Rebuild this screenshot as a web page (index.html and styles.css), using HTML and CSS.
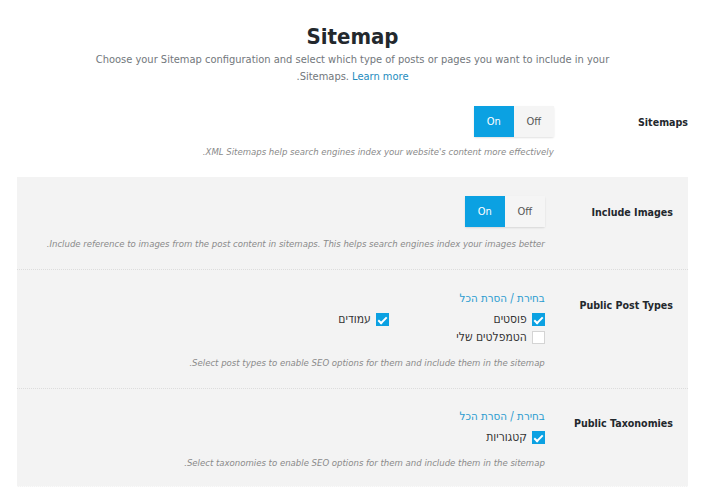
FILE: index.html
```html
<!DOCTYPE html>
<html lang="he" dir="rtl">
<head>
<meta charset="utf-8">
<link rel="stylesheet" href="styles.css">
</head>
<body>
<div class="page">
  <header class="intro">
    <h1>Sitemap</h1>
    <p>Choose your Sitemap configuration and select which type of posts or pages you want to include in your<br>Sitemaps. <a href="#">Learn more</a>.</p>
  </header>

  <div class="row top">
    <div class="label">Sitemaps</div>
    <div class="field">
      <div class="toggle"><span class="opt on">On</span><span class="opt">Off</span></div>
      <p class="desc">XML Sitemaps help search engines index your website's content more effectively.</p>
    </div>
  </div>

  <div class="panel">
    <div class="row images">
      <div class="label">Include Images</div>
      <div class="field">
        <div class="toggle"><span class="opt on">On</span><span class="opt">Off</span></div>
        <p class="desc">Include reference to images from the post content in sitemaps. This helps search engines index your images better.</p>
      </div>
    </div>

    <div class="row types">
      <div class="label">Public Post Types</div>
      <div class="field">
        <a class="select-all" href="#">בחירת / הסרת הכל</a>
        <div class="checks">
          <label class="check"><span class="box checked"></span>פוסטים</label>
          <label class="check"><span class="box checked"></span>עמודים</label>
          <label class="check"><span class="box"></span>הטמפלטים שלי</label>
        </div>
        <p class="desc">Select post types to enable SEO options for them and include them in the sitemap.</p>
      </div>
    </div>

    <div class="row last">
      <div class="label">Public Taxonomies</div>
      <div class="field">
        <a class="select-all" href="#">בחירת / הסרת הכל</a>
        <div class="checks">
          <label class="check"><span class="box checked"></span>קטגוריות</label>
        </div>
        <p class="desc">Select taxonomies to enable SEO options for them and include them in the sitemap.</p>
      </div>
    </div>
  </div>
</div>
</body>
</html>
```
FILE: styles.css
```css
html, body {
  margin: 0;
  background: #fff;
}
body {
  font-family: Tahoma, "DejaVu Sans Condensed", "DejaVu Sans", sans-serif;
  color: #23282d;
  font-size: 12px;
}
.page {
  padding: 0 17px;
}
.intro {
  text-align: center;
}
.intro h1 {
  margin: 23px 0 0;
  font-size: 22px;
  line-height: 28px;
  font-weight: bold;
  color: #23282d;
}
.intro p {
  width: 530px;
  margin: 0 auto;
  font-size: 11px;
  line-height: 17px;
  color: #72777c;
}
.intro a {
  color: #1e8cbe;
  text-decoration: none;
}
.row {
  display: grid;
  grid-template-columns: 20% 1fr;
}
.row.top {
  padding: 21px 0 17px;
}
.panel {
  background: #f3f3f3;
}
.panel .row {
  padding: 19px 15px 17px;
  border-bottom: 1px dotted #dcdcdc;
}
.panel .row.last {
  padding-top: 18px;
  padding-bottom: 15px;
  border-bottom: 1px dotted #fbfbfb;
}
.label {
  font-weight: bold;
  font-size: 10.6px;
  line-height: 18px;
  padding-top: 7px;
  color: #23282d;
}
.toggle {
  display: inline-flex;
  border-radius: 2px;
  box-shadow: 0 1px 2px rgba(0, 0, 0, 0.12);
  direction: ltr;
}
.opt {
  width: 40px;
  height: 31px;
  line-height: 31px;
  text-align: center;
  font-size: 11px;
  background: #f5f5f5;
  color: #555;
}
.opt.on {
  background: #0ba1e2;
  color: #fff;
}
.desc {
  margin: 9px 0 0;
  font-size: 9.5px;
  line-height: 16px;
  font-style: italic;
  color: #8a8a8a;
}
.row.top .desc {
  margin-top: 7px;
}
.select-all {
  display: block;
  font-size: 11.5px;
  line-height: 18px;
  color: #2a9bd0;
  text-decoration: none;
  margin-bottom: 3px;
}
.checks {
  display: grid;
  grid-template-columns: 156px 156px;
}
.check {
  display: flex;
  align-items: center;
  gap: 5px;
  height: 18px;
  font-size: 12px;
  color: #333;
}
.box {
  width: 13px;
  height: 13px;
  box-sizing: border-box;
  border: 1px solid #d4d4d4;
  background: #fff;
  position: relative;
}
.box.checked {
  background: #0ba1e2;
  border-color: #0ba1e2;
}
.box.checked::after {
  content: "";
  position: absolute;
  left: 3px;
  top: 1px;
  width: 3px;
  height: 7px;
  border: solid #fff;
  border-width: 0 2px 2px 0;
  transform: rotate(45deg);
}
```
